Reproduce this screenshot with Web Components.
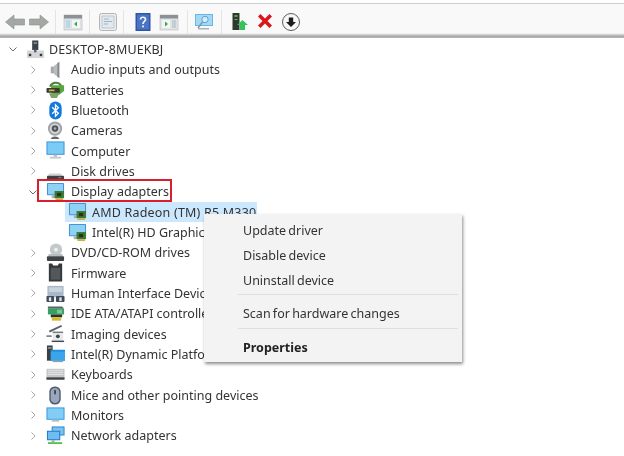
<!DOCTYPE html>
<html>
<head>
<meta charset="utf-8">
<title>Device Manager</title>
<style>
  html, body { margin: 0; background: #fff; }
</style>
</head>
<body>
<dm-window>
  <dm-toolbar slot="toolbar"></dm-toolbar>
  <dm-tree>
    <dm-row level="0" icon="pc" open>DESKTOP-8MUEKBJ</dm-row>
    <dm-row level="1" icon="audio">Audio inputs and outputs</dm-row>
    <dm-row level="1" icon="battery">Batteries</dm-row>
    <dm-row level="1" icon="bluetooth">Bluetooth</dm-row>
    <dm-row level="1" icon="camera">Cameras</dm-row>
    <dm-row level="1" icon="computer">Computer</dm-row>
    <dm-row level="1" icon="disk">Disk drives</dm-row>
    <dm-row level="1" icon="display" open marked>Display adapters</dm-row>
    <dm-row level="2" icon="display" selected>AMD Radeon (TM) R5 M330</dm-row>
    <dm-row level="2" icon="display">Intel(R) HD Graphics 5500</dm-row>
    <dm-row level="1" icon="dvd">DVD/CD-ROM drives</dm-row>
    <dm-row level="1" icon="firmware">Firmware</dm-row>
    <dm-row level="1" icon="hid">Human Interface Devices</dm-row>
    <dm-row level="1" icon="ide">IDE ATA/ATAPI controllers</dm-row>
    <dm-row level="1" icon="imaging">Imaging devices</dm-row>
    <dm-row level="1" icon="intel">Intel(R) Dynamic Platform</dm-row>
    <dm-row level="1" icon="keyboard">Keyboards</dm-row>
    <dm-row level="1" icon="mouse">Mice and other pointing devices</dm-row>
    <dm-row level="1" icon="monitor">Monitors</dm-row>
    <dm-row level="1" icon="network">Network adapters</dm-row>
  </dm-tree>
  <dm-menu slot="overlay">
    <dm-menu-item>Update driver</dm-menu-item>
    <dm-menu-item>Disable device</dm-menu-item>
    <dm-menu-item>Uninstall device</dm-menu-item>
    <dm-menu-sep></dm-menu-sep>
    <dm-menu-item>Scan for hardware changes</dm-menu-item>
    <dm-menu-sep></dm-menu-sep>
    <dm-menu-item bold>Properties</dm-menu-item>
  </dm-menu>
</dm-window>

<script>
// all icons live here so the toolbar and the tree share one source
const screenBlue = `
  <rect x="1" y="1" width="18" height="13" rx="1" fill="#3d8fd0"/>
  <rect x="2" y="2" width="16" height="11" fill="#8fd0f5"/>`;
const greenCard = `
  <rect x="9" y="9.500" width="10" height="7.500" fill="#3d7a35"/>
  <rect x="11.500" y="11.500" width="4.500" height="3.500" fill="#26331f"/>
  <rect x="10" y="17" width="8" height="2" fill="#c9b04a"/>`;

const ICONS = {
  pc: `<rect x="6.500" y="0.500" width="6.500" height="10" fill="#3a4148"/>
       <rect x="8" y="2.500" width="3.500" height="1.400" fill="#9aa3aa"/>
       <rect x="1" y="11" width="18" height="8" fill="#d4d6d8"/>
       <rect x="3" y="14.500" width="2.500" height="2.500" fill="#30363b"/>
       <rect x="14.500" y="14.500" width="2.500" height="2.500" fill="#30363b"/>
       <rect x="8.500" y="10" width="2.500" height="3" fill="#5a6268"/>`,
  audio: `<rect x="5" y="7" width="4" height="7" fill="#a5a8aa"/>
       <path d="M8 6.500 14 2v17l-6-4.500z" fill="#b9bcbe"/>
       <path d="M12 3.200 14 2v17l-2-1.200z" fill="#85898c"/>`,
  battery: `<path d="M3.500 7C4 1 15 0 17 6l-2 .5C13 3 7 3 6 7z" fill="#4f7f4c"/>
       <path d="M5 5.500h14v6l-5 4H6z" fill="#58a83e"/>
       <rect x="0.500" y="8.500" width="14" height="5" rx="1" fill="#3c3a2c"/>
       <rect x="3" y="10" width="6" height="1.800" fill="#c8b15a"/>
       <path d="M3 14h11l-2.500 5h-6z" fill="#7aa46a"/>`,
  bluetooth: `<rect x="3.500" y="0.500" width="13" height="19" rx="6.500" fill="#1278de"/>
       <path d="M6.500 6.500 13 13 10 16V4l3 3-6.500 6.500" fill="none" stroke="#fff" stroke-width="1.400"/>`,
  camera: `<circle cx="9.500" cy="8" r="7.500" fill="#9ea3a6"/>
       <circle cx="9.500" cy="8" r="5.500" fill="#d5d7d8"/>
       <circle cx="9.500" cy="8" r="3.500" fill="#50575c"/>
       <circle cx="9.500" cy="8" r="1.300" fill="#a3abb0"/>
       <path d="M5 19c1-3.500 8-3.500 9 0z" fill="#63686c"/>`,
  computer: `<rect x="0.500" y="0.500" width="19" height="14" fill="#2f8fd8"/>
       <rect x="1.500" y="1.500" width="17" height="12" fill="#7ccbf6"/>
       <rect x="8" y="14.500" width="3.500" height="2" fill="#b5babd"/>
       <rect x="4" y="16.500" width="12" height="2" fill="#c5cacd"/>`,
  disk: `<path d="M3.500 12h12l2 2.500h-16z" fill="#d0d2d3"/>
       <rect x="1" y="14.500" width="18" height="4.500" rx="1" fill="#3d4144"/>
       <rect x="13" y="16" width="3" height="1" fill="#8b8f92"/>`,
  display: `${screenBlue}<rect x="6" y="14" width="5" height="3" fill="#aab0b4"/>${greenCard}`,
  dvd: `<circle cx="10.500" cy="7" r="6.500" fill="#c3c8ca"/>
       <circle cx="10.500" cy="7" r="2" fill="#eef0f1"/>
       <path d="M3 11.500h14l1 2.500H2z" fill="#b9bcbe"/>
       <rect x="1" y="14" width="18" height="5" rx="1" fill="#3f4346"/>`,
  firmware: `<path d="M3 0.500h3.500l1 2h5l1-2H17v19H3z" fill="#34383b"/>
       <rect x="5" y="5" width="10" height="12.500" fill="#53585c"/>`,
  hid: `<rect x="1.500" y="2" width="17" height="12" fill="#a9b7c9"/>
       <rect x="3" y="3.500" width="14" height="5" fill="#c9d3de"/>
       <rect x="0.500" y="12.500" width="8" height="6.500" rx="1" fill="#3e4a5c"/>
       <rect x="10.500" y="12.500" width="9" height="6.500" rx="1" fill="#3e4a5c"/>
       <rect x="3" y="14" width="2.500" height="4" fill="#dfe4ea"/>
       <rect x="14" y="14" width="2.500" height="4" fill="#dfe4ea"/>`,
  ide: `<path d="M2 2.500h15l2 2.500H2z" fill="#54686a"/>
       <rect x="2" y="5" width="17" height="6" fill="#35a060"/>
       <rect x="11.500" y="6" width="5.500" height="4" fill="#7cc49a"/>
       <rect x="5" y="11" width="12" height="3" fill="#23362c"/>
       <rect x="6" y="14" width="10" height="3.500" fill="#d7b92c"/>`,
  imaging: `<path d="M3 7 16 1l1 1.500L4 9z" fill="#5b6064"/>
       <rect x="0.500" y="12" width="5.500" height="1.500" fill="#666b6f"/>
       <rect x="7" y="8" width="11" height="10.500" fill="#e7e9ea"/>
       <rect x="7" y="8" width="11" height="1.500" fill="#777c80"/>
       <circle cx="12.500" cy="13" r="2" fill="#3e4448"/>
       <rect x="6" y="17.500" width="13" height="1.500" fill="#44494d"/>`,
  intel: `<rect x="1" y="0.500" width="6" height="16" fill="#3a4045"/>
       <rect x="2" y="2.500" width="4" height="1.200" fill="#b2b8bc"/>
       <rect x="5" y="5" width="15" height="11.500" fill="#1d8fdc"/>
       <rect x="5" y="7" width="15" height="9.500" fill="#3aa5ea"/>
       <rect x="7" y="16.500" width="11" height="1.500" fill="#8fa0aa"/>`,
  keyboard: `<rect x="0.500" y="4" width="19" height="11" fill="#c4c6c8"/>
       <path d="M2 6h16M2 8h16M2 10h16" stroke="#e4e5e6" stroke-width="1"/>
       <rect x="0.500" y="13" width="19" height="2.500" fill="#3f4346"/>`,
  mouse: `<rect x="3.500" y="0.500" width="12" height="19" rx="5.500" fill="#515c6e"/>
       <rect x="5" y="2" width="9" height="16" rx="4.500" fill="#9aa7ba"/>
       <rect x="8.500" y="4" width="2" height="5" rx="1" fill="#3f4858"/>`,
  monitor: `<rect x="0.500" y="1.500" width="19" height="13" fill="#3194dc"/>
       <rect x="1.500" y="2.500" width="17" height="11" fill="#82cdf6"/>
       <rect x="6" y="14.500" width="8" height="2" fill="#b9bec1"/>`,
  network: `<rect x="6" y="0.500" width="13.500" height="9.500" fill="#2480cf"/>
       <rect x="7" y="1.500" width="11.500" height="7.500" fill="#7cc4ee"/>
       <rect x="1" y="5" width="14" height="10" fill="#1f78c8"/>
       <rect x="2" y="6" width="12" height="8" fill="#6fbdf0"/>
       <rect x="6" y="15" width="3" height="2" fill="#9fb0a0"/>
       <rect x="2" y="17" width="15" height="2" fill="#5cc04a"/>`,

  // toolbar
  back: `<path d="M.500 10 9 3v4h10.500v6H9v4z" fill="#a4a8a5" stroke="#8a8e8b" stroke-width=".6"/>`,
  forward: `<path d="M19.500 10 11 3v4H.500v6H11v4z" fill="#a4a8a5" stroke="#8a8e8b" stroke-width=".6"/>`,
  pane1: `<rect x="1" y="3" width="18" height="15" fill="#dfe3e6" stroke="#b5b9bc" stroke-width=".6"/>
       <rect x="1" y="3" width="18" height="3.500" fill="#8c9196"/>
       <rect x="3" y="8" width="4" height="8" fill="#b9d6ea"/>
       <rect x="9" y="8" width="8" height="8" fill="#f4f6f6"/>
       <path d="M14 9.500v5l-3-2.500z" fill="#39a845"/>`,
  props: `<rect x="1.500" y="1.500" width="17" height="17" rx="2" fill="#eceeee" stroke="#b3b6b6"/>
       <rect x="4" y="4" width="12" height="12" fill="#dfe9ee" stroke="#a8b0b4" stroke-width=".6"/>
       <path d="M6 7h5M6 9.500h8M6 12h4" stroke="#9fb4c0"/>`,
  help: `<rect x="2.500" y="1" width="15" height="18" fill="#2f56a8"/>
       <rect x="4" y="2.500" width="12" height="15" fill="#4a73c4"/>
       <path d="M7.500 7.500C7.500 4.500 12.500 4.500 12.500 7.500 12.500 9.500 10 9.500 10 12" fill="none" stroke="#f2f5fb" stroke-width="1.700"/>
       <rect x="9.100" y="13.500" width="1.800" height="1.800" fill="#f2f5fb"/>`,
  pane2: `<rect x="1" y="3" width="18" height="15" fill="#dfe3e6" stroke="#b5b9bc" stroke-width=".6"/>
       <rect x="1" y="3" width="18" height="3.500" fill="#8c9196"/>
       <rect x="3" y="8" width="8" height="8" fill="#f4f6f6"/>
       <rect x="13" y="8" width="4" height="8" fill="#c5cdd2"/>
       <path d="M6 9.500v5l3-2.500z" fill="#39a845"/>`,
  scan: `<rect x="1" y="2" width="18" height="12" fill="#6cb6e6"/>
       <rect x="2" y="3" width="16" height="10" fill="#a5d8f4"/>
       <circle cx="11" cy="7.500" r="3.200" fill="#d4ecf8" stroke="#5aa2d0"/>
       <path d="M8.500 10 4 16" stroke="#7f9aa8" stroke-width="1.600"/>
       <rect x="4" y="16" width="11" height="1.500" fill="#a8b6bc"/>`,
  update: `<rect x="2.500" y="1" width="7" height="17" fill="#2e3a2e"/>
       <rect x="4.500" y="3" width="3" height="2" fill="#43b04a"/>
       <rect x="4.500" y="7" width="3" height="1" fill="#8c958c"/>
       <path d="M12.500 8 18 13h-3v5h-5v-5H7z" fill="#36c45a"/>`,
  remove: `<path d="M3 4.500 5.500 2 10 6.500 14.500 2 17 4.500 12.500 9 17 13.500 14.500 16 10 11.500 5.500 16 3 13.500 7.500 9z" fill="#d9161c"/>`,
  install: `<circle cx="10" cy="10" r="8.500" fill="#f7f7f7" stroke="#5d5d5d"/>
       <path d="M10 15 5 10h2.800V5.500h4.400V10H15z" fill="#1c1c1c"/>`
};

class DmIcon extends HTMLElement {
  connectedCallback() {
    const size = this.getAttribute('size') || 19;
    this.attachShadow({ mode: 'open' });
    this.shadowRoot.innerHTML = `
      <style>
        :host { display: block; flex: none; width: ${size}px; height: ${size}px; }
        svg { display: block; }
      </style>
      <svg width="${size}" height="${size}" viewBox="0 0 20 20" aria-hidden="true">${ICONS[this.getAttribute('name')] || ''}</svg>`;
  }
}
customElements.define('dm-icon', DmIcon);

class DmWindow extends HTMLElement {
  connectedCallback() {
    this.attachShadow({ mode: 'open' });
    // the screenshot is a soft, upscaled capture, so soften everything a little
    this.shadowRoot.innerHTML = `
      <style>
        :host {
          display: block;
          position: relative;
          width: 624px;
          height: 456px;
          overflow: hidden;
          background: #fff;
          color: #333;
          font: 12.5px "Noto Sans", "Open Sans", sans-serif;
          filter: blur(0.5px);
        }
      </style>
      <slot name="toolbar"></slot>
      <slot></slot>
      <slot name="overlay"></slot>`;
  }
}
customElements.define('dm-window', DmWindow);

class DmToolbar extends HTMLElement {
  connectedCallback() {
    this.attachShadow({ mode: 'open' });
    // [icon, left gap] for each toolbar entry; null is a separator
    const items = [
      ['back', 5], ['forward', 4], [null, 6], ['pane1', 7], [null, 6], ['props', 8], [null, 5],
      ['help', 9], ['pane2', 6], [null, 8], ['scan', 6], [null, 7], ['update', 8], ['remove', 5], ['install', 6]
    ];
    const body = items.map(([name, gap]) => name
      ? `<dm-icon name="${name}" size="20" style="margin-left:${gap}px"></dm-icon>`
      : `<i style="margin-left:${gap}px"></i>`).join('');
    this.shadowRoot.innerHTML = `
      <style>
        :host {
          display: flex;
          align-items: center;
          box-sizing: border-box;
          height: 38px;
          padding-top: 3px;
          border-top: 3px solid #fff;
          background: linear-gradient(#cfcfcf 0 1px, #f9f9f9 1px, #f9f9f9 30px, #e4e4e4 31px, #a9a9a9 33px, #b5b5b5 35px);
        }
        i { flex: none; width: 1px; height: 24px; background: #e3e3e3; }
      </style>
      ${body}`;
  }
}
customElements.define('dm-toolbar', DmToolbar);

class DmTree extends HTMLElement {
  connectedCallback() {
    this.attachShadow({ mode: 'open' });
    this.shadowRoot.innerHTML = `
      <style>
        :host { display: grid; grid-auto-rows: 20.35px; padding-top: 1px; }
      </style>
      <slot></slot>`;
  }
}
customElements.define('dm-tree', DmTree);

class DmRow extends HTMLElement {
  connectedCallback() {
    const level = +this.getAttribute('level');
    const left = [8, 28, 50][level];
    const open = this.hasAttribute('open');
    const chevron = level === 2 ? '' : open
      ? '<path d="M1.500 3.500 5 7l3.500-3.500" fill="none" stroke="#6d6d6d"/>'
      : '<path d="M3.500 1.500 7 5l-3.500 3.500" fill="none" stroke="#a8a8a8"/>';
    this.attachShadow({ mode: 'open' });
    this.shadowRoot.innerHTML = `
      <style>
        :host { display: flex; align-items: center; padding-left: ${left}px; white-space: nowrap; }
        svg.chev { flex: none; width: 10px; height: 10px; }
        .item {
          position: relative;
          display: flex;
          align-items: center;
          height: 100%;
          margin-left: ${level === 2 ? 5 : 8}px;
          padding-left: ${level === 2 ? 3 : 0}px;
        }
        .item span { padding-top: .5px; }
        dm-icon { margin-right: ${level === 0 ? 4 : level === 2 ? 5 : 6}px; }
        :host([level="0"]) .item span { letter-spacing: .12px; }
        :host([selected]) .item { background: #cce8ff; padding-right: 1px; }
        :host([selected]) .item span { letter-spacing: .2px; }
        :host([marked]) .item::after {
          content: '';
          position: absolute;
          left: -9px;
          right: -3px;
          top: -2px;
          bottom: 0;
          border: 2px solid #d81f2a;
        }
      </style>
      <svg class="chev" viewBox="0 0 10 10" aria-hidden="true">${chevron}</svg>
      <div class="item">
        <dm-icon name="${this.getAttribute('icon')}"></dm-icon>
        <span><slot></slot></span>
      </div>`;
  }
}
customElements.define('dm-row', DmRow);

class DmMenu extends HTMLElement {
  connectedCallback() {
    this.attachShadow({ mode: 'open' });
    this.shadowRoot.innerHTML = `
      <style>
        :host {
          position: absolute;
          left: 204px;
          top: 214px;
          width: 258px;
          box-sizing: border-box;
          padding: 3.5px 0 2px;
          background: #f3f3f3;
          word-spacing: -1px;
          box-shadow: 1px 2px 3px rgba(0, 0, 0, .45);
        }
      </style>
      <slot></slot>`;
  }
}
customElements.define('dm-menu', DmMenu);

class DmMenuItem extends HTMLElement {
  connectedCallback() {
    this.attachShadow({ mode: 'open' });
    this.shadowRoot.innerHTML = `
      <style>
        :host {
          display: flex;
          align-items: center;
          height: 25px;
          padding-left: 39px;
          white-space: nowrap;
        }
        :host([bold]) { font-weight: 700; color: #222; }
      </style>
      <slot></slot>`;
  }
}
customElements.define('dm-menu-item', DmMenuItem);

class DmMenuSep extends HTMLElement {
  connectedCallback() {
    this.attachShadow({ mode: 'open' });
    this.shadowRoot.innerHTML = `
      <style>
        :host { display: block; height: 1px; margin: 1px 4px 6px 34px; background: #dedede; }
        :host(:last-of-type) { margin-top: 2px; margin-bottom: 6px; }
      </style>`;
  }
}
customElements.define('dm-menu-sep', DmMenuSep);
</script>
</body>
</html>
